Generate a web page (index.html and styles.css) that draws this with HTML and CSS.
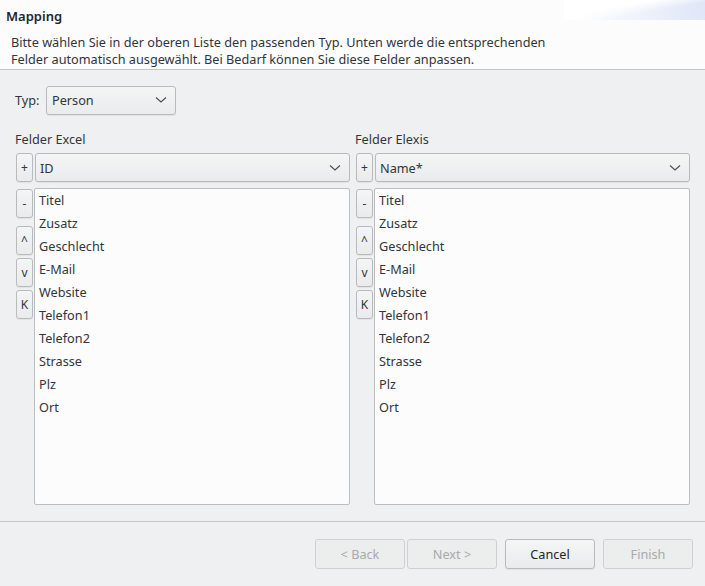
FILE: index.html
```html
<!DOCTYPE html>
<html>
<head>
<meta charset="utf-8">
<link rel="stylesheet" href="styles.css">
</head>
<body>
<div class="header">
  <div class="banner"></div>
  <div class="title">Mapping</div>
  <div class="desc">Bitte wählen Sie in der oberen Liste den passenden Typ. Unten werde die entsprechenden<br>Felder automatisch ausgewählt. Bei Bedarf können Sie diese Felder anpassen.</div>
</div>
<div class="content">
  <div class="typrow">
    <span class="lbl">Typ:</span>
    <div class="combo small"><span>Person</span><svg class="chev" width="12" height="8" viewBox="0 0 12 8"><path d="M1 1.5 L6 6 L11 1.5" fill="none" stroke="#4d4d4d" stroke-width="1.1"/></svg></div>
  </div>
  <div class="cols">
    <div class="col">
      <div class="caption">Felder Excel</div>
      <div class="toprow">
        <div class="btn sq">+</div>
        <div class="combo wide"><span>ID</span><svg class="chev" width="12" height="8" viewBox="0 0 12 8"><path d="M1 1.5 L6 6 L11 1.5" fill="none" stroke="#4d4d4d" stroke-width="1.1"/></svg></div>
      </div>
      <div class="mainrow">
        <div class="side">
          <div class="btn sq">-</div>
          <div class="btn sq gap">^</div>
          <div class="btn sq">v</div>
          <div class="btn sq">K</div>
        </div>
        <div class="list">
          <div>Titel</div><div>Zusatz</div><div>Geschlecht</div><div>E-Mail</div><div>Website</div><div>Telefon1</div><div>Telefon2</div><div>Strasse</div><div>Plz</div><div>Ort</div>
        </div>
      </div>
    </div>
    <div class="col">
      <div class="caption">Felder Elexis</div>
      <div class="toprow">
        <div class="btn sq">+</div>
        <div class="combo wide"><span>Name*</span><svg class="chev" width="12" height="8" viewBox="0 0 12 8"><path d="M1 1.5 L6 6 L11 1.5" fill="none" stroke="#4d4d4d" stroke-width="1.1"/></svg></div>
      </div>
      <div class="mainrow">
        <div class="side">
          <div class="btn sq">-</div>
          <div class="btn sq gap">^</div>
          <div class="btn sq">v</div>
          <div class="btn sq">K</div>
        </div>
        <div class="list">
          <div>Titel</div><div>Zusatz</div><div>Geschlecht</div><div>E-Mail</div><div>Website</div><div>Telefon1</div><div>Telefon2</div><div>Strasse</div><div>Plz</div><div>Ort</div>
        </div>
      </div>
    </div>
  </div>
</div>
<div class="footer">
  <div class="btn act disabled">&lt; Back</div>
  <div class="btn act disabled">Next &gt;</div>
  <div class="btn act cancel">Cancel</div>
  <div class="btn act disabled">Finish</div>
</div>
</body>
</html>
```
FILE: styles.css
```css
html, body {
  margin: 0;
  padding: 0;
}
body {
  width: 705px;
  height: 586px;
  background: #eff0f1;
  font-family: "Noto Sans", "DejaVu Sans", sans-serif;
  font-size: 12.7px;
  color: #31363b;
  overflow: hidden;
}
.header {
  position: relative;
  background: #fcfcfc;
  height: 69px;
  border-bottom: 1px solid #c4c5c6;
}
.banner {
  position: absolute;
  right: 0;
  top: 0;
  width: 141px;
  height: 20px;
  background: linear-gradient(170deg, #ffffff 35%, rgba(255,255,255,0) 60%), linear-gradient(90deg, #ffffff 0%, #f0f3fb 50%, #dfe6f7 100%);
}
.title {
  position: relative;
  padding: 6px 0 0 6px;
  font-weight: 600;
  font-size: 13px;
  line-height: 20px;
  color: #232629;
}
.desc {
  position: relative;
  padding: 8px 0 0 11px;
  line-height: 17px;
  color: #31363b;
}
.content {
  padding: 16px 15px 0 15px;
  height: 435px;
  border-bottom: 1px solid #c4c5c6;
}
.typrow {
  display: flex;
  align-items: center;
  height: 28px;
}
.lbl {
  width: 31px;
}
.combo {
  display: flex;
  align-items: center;
  justify-content: space-between;
  box-sizing: border-box;
  height: 29px;
  border: 1px solid #b9babc;
  border-radius: 3px;
  background: linear-gradient(#f4f5f5, #eaebec);
  padding: 0 8px 0 4px;
  box-shadow: 0 1px 1px rgba(0,0,0,0.06);
}
.combo.small {
  width: 130px;
  padding-left: 5px;
}
.combo.wide {
  flex: 1;
}
.chev {
  display: block;
}
.cols {
  display: flex;
  gap: 5px;
  margin-top: 17px;
}
.col {
  width: 335px;
}
.caption {
  height: 17px;
  line-height: 17px;
  margin-bottom: 5px;
}
.toprow {
  display: flex;
  gap: 2px;
  padding-left: 1px;
}
.btn {
  box-sizing: border-box;
  border: 1px solid #b9babc;
  border-radius: 3px;
  background: linear-gradient(#f4f5f5, #eaebec);
  display: flex;
  align-items: center;
  justify-content: center;
  box-shadow: 0 1px 1px rgba(0,0,0,0.06);
}
.btn.sq {
  width: 17px;
  height: 29px;
  font-size: 12px;
}
.mainrow {
  display: flex;
  gap: 1px;
  margin-top: 6px;
  padding-left: 1px;
}
.side {
  display: flex;
  flex-direction: column;
  gap: 3px;
  padding-top: 1px;
}
.side .gap {
  margin-top: 5px;
}
.list {
  flex: 1;
  height: 317px;
  box-sizing: border-box;
  border: 1px solid #bcbdbe;
  border-radius: 2px;
  background: #fcfcfc;
  padding: 0 0 0 4px;
}
.list div {
  height: 23px;
  line-height: 23px;
}
.footer {
  display: flex;
  justify-content: flex-end;
  padding: 17px 12px 0 0;
  gap: 2px;
}
.btn.act {
  width: 90px;
  height: 30px;
}
.btn.cancel {
  margin-left: 6px;
  margin-right: 6px;
  color: #232629;
}
.btn.disabled {
  color: #a8aaac;
  background: #eceded;
  border-color: #cfd0d1;
  box-shadow: none;
}
```
